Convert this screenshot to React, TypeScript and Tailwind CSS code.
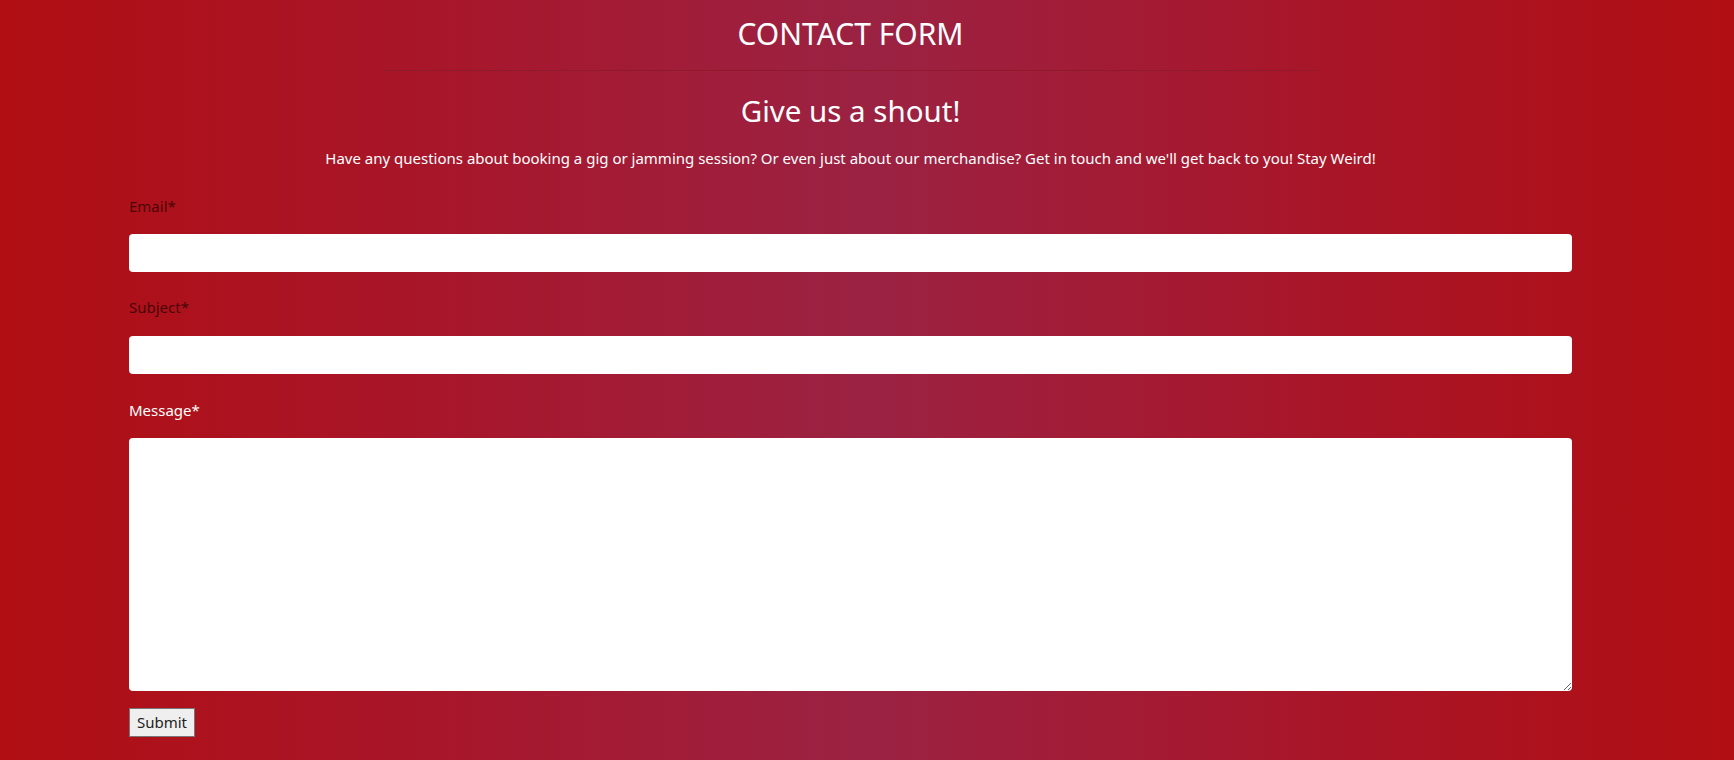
import React from 'react';

export default function App() {
  return (
    <div
      className="min-h-[760px] w-full bg-[linear-gradient(to_right,#b00e12_0%,#a8162a_25%,#9b2243_50%,#a8162a_75%,#b00e12_100%)] pl-[129px] pr-[162px] text-white"
      style={{ fontFamily: '"Noto Sans", "Open Sans", sans-serif' }}
    >
      <h1 className="pt-[16px] text-center text-[30px] leading-[36px] font-normal">CONTACT FORM</h1>
      <hr className="mx-auto mt-[18px] w-[935px] border-0 border-t border-[#8e1a2c]" />
      <h2 className="mt-[22px] text-center text-[29.5px] leading-[36px] font-normal">Give us a shout!</h2>
      <p className="mt-[18px] text-center text-[15px] leading-[22px] font-normal">
        Have any questions about booking a gig or jamming session? Or even just about our merchandise? Get in touch and we'll get back to you! Stay Weird!
      </p>

      <form className="mt-[26px] flex flex-col">
        <label className="text-[15px] leading-[22px] text-[#4a0508]">Email*</label>
        <input type="email" className="mt-[17px] h-[38px] w-full rounded-[4px] bg-white px-3 text-black outline-none" />

        <label className="mt-[24px] text-[15px] leading-[22px] text-[#4a0508]">Subject*</label>
        <input type="text" className="mt-[18px] h-[38px] w-full rounded-[4px] bg-white px-3 text-black outline-none" />

        <label className="mt-[25px] text-[15px] leading-[22px] text-white">Message*</label>
        <textarea className="mt-[17px] h-[253px] w-full rounded-[4px] bg-white p-3 text-black outline-none" />

        <div className="mt-[17px]">
          <button
            type="button"
            className="h-[29px] w-[66px] border border-[#767676] bg-[#efefef] text-[15px] text-[#222]"
          >
            Submit
          </button>
        </div>
      </form>
    </div>
  );
}
